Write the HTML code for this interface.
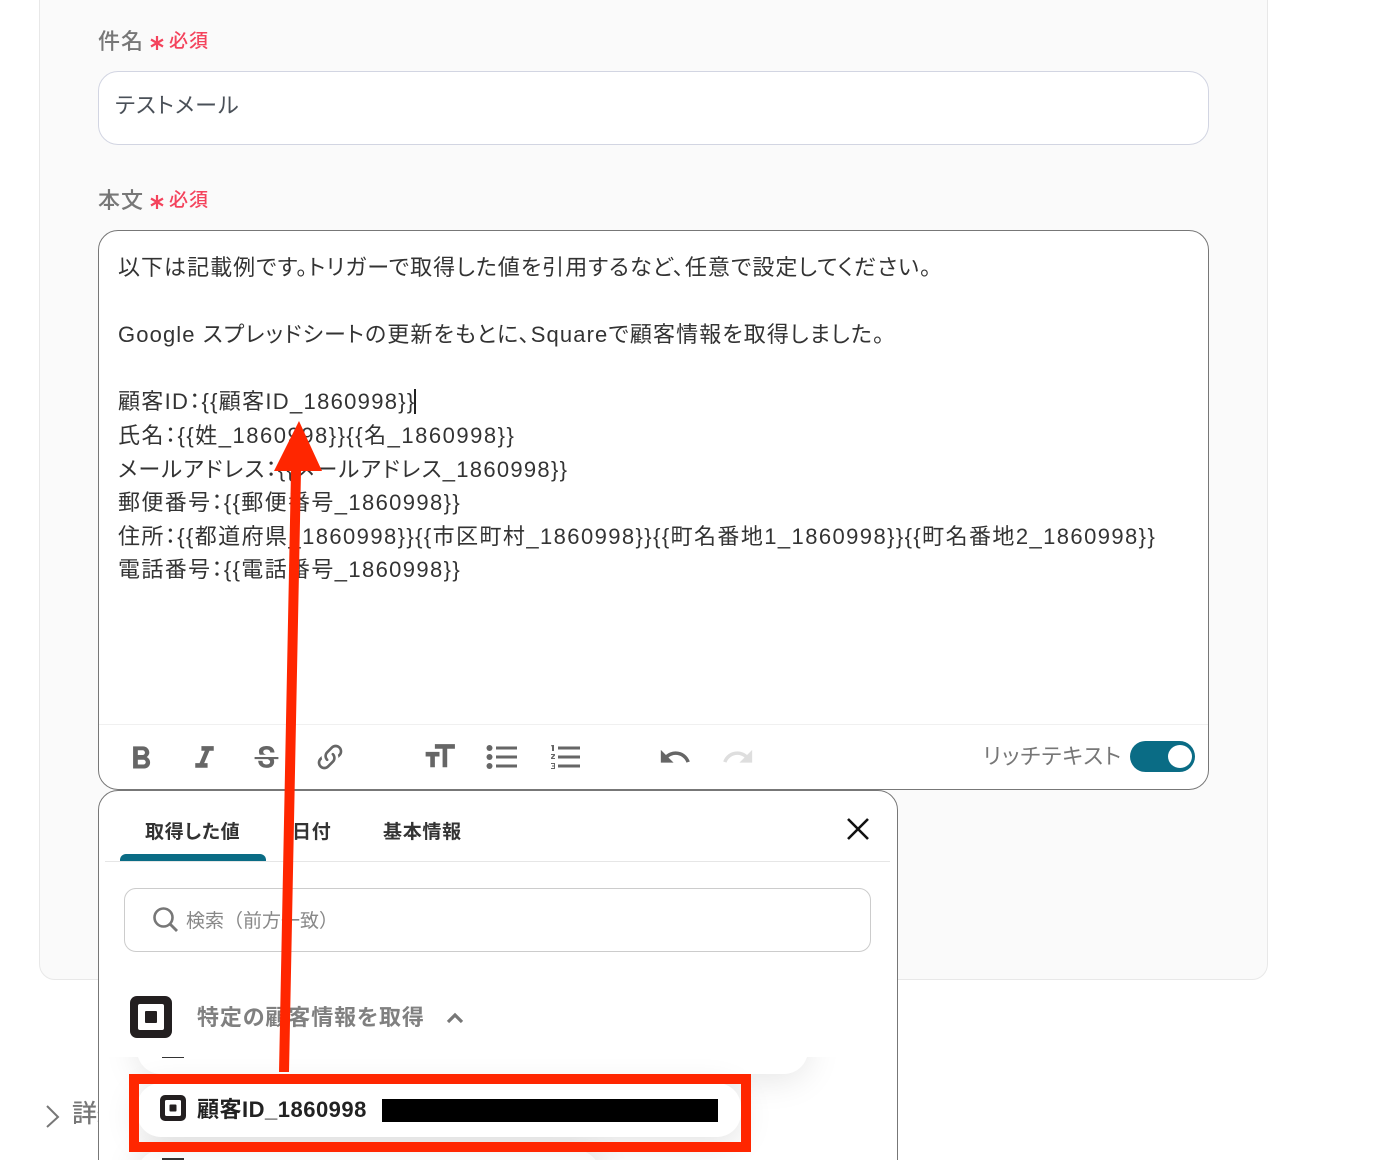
<!DOCTYPE html>
<html lang="ja"><head><meta charset="utf-8"><title>メール設定</title>
<style>
*{box-sizing:border-box;margin:0;padding:0}
html,body{width:1388px;height:1160px;overflow:hidden;background:#fff}
body{position:relative;font-family:"Liberation Sans","Noto Sans CJK JP",sans-serif;font-feature-settings:"palt"}
.a{position:absolute}
.t{position:absolute;white-space:nowrap;line-height:34px}
.b{font-size:22px;color:#333;left:118px}
.lab{font-size:22px;color:#777;font-weight:500;left:98px;letter-spacing:1px}
.req{font-size:19px;color:#f4435c;font-weight:500;left:169px;letter-spacing:1px}
.tab{font-size:19px;color:#333;font-weight:700;letter-spacing:.7px;top:816px}
svg{position:absolute;display:block}
.ic{fill:#666}
</style></head><body>
<div class="a" style="left:39px;top:-20px;width:1229px;height:1000px;background:#fafafa;border:1px solid #e8e8e8;border-radius:16px"></div>

<span class="t lab" style="top:25px">件名</span>
<svg style="left:149px;top:35px" width="16" height="16" viewBox="0 0 16 16"><path d="M8,1V15M2,4.500L14,11.500M14,4.500L2,11.500" stroke="#f4435c" stroke-width="2.200" fill="none"/></svg>
<span class="t req" style="top:25px">必須</span>
<div class="a" style="left:98px;top:71px;width:1111px;height:74px;background:#fff;border:1px solid #d2d5e2;border-radius:20px"></div>
<span class="t" style="left:115px;top:89px;font-size:22px;color:#4a5058;letter-spacing:1.100px">テストメール</span>

<span class="t lab" style="top:184px">本文</span>
<svg style="left:149px;top:194px" width="16" height="16" viewBox="0 0 16 16"><path d="M8,1V15M2,4.500L14,11.500M14,4.500L2,11.500" stroke="#f4435c" stroke-width="2.200" fill="none"/></svg>
<span class="t req" style="top:184px">必須</span>
<div class="a" style="left:98px;top:230px;width:1111px;height:560px;background:#fff;border:1px solid #777;border-radius:20px"></div>
<span class="t b" style="top:251px;letter-spacing:1.030px">以下は記載例です。トリガーで取得した値を引用するなど、任意で設定してください。</span>
<span class="t b" style="top:318px;letter-spacing:1.120px">Google スプレッドシートの更新をもとに、Squareで顧客情報を取得しました。</span>
<span class="t b" style="top:385px;letter-spacing:1.300px">顧客ID：{{顧客ID_1860998}}</span>
<div class="a" style="left:414px;top:389px;width:2px;height:25px;background:#222"></div>
<span class="t b" style="top:419px;letter-spacing:1.510px">氏名：{{姓_1860998}}{{名_1860998}}</span>
<span class="t b" style="top:453px;letter-spacing:1.290px">メールアドレス：{{メールアドレス_1860998}}</span>
<span class="t b" style="top:486px;letter-spacing:1.370px">郵便番号：{{郵便番号_1860998}}</span>
<span class="t b" style="top:520px;letter-spacing:1.415px">住所：{{都道府県_1860998}}{{市区町村_1860998}}{{町名番地1_1860998}}{{町名番地2_1860998}}</span>
<span class="t b" style="top:553px;letter-spacing:1.370px">電話番号：{{電話番号_1860998}}</span>

<div class="a" style="left:99px;top:724px;width:1109px;height:1px;background:#f0f0f0"></div>
<svg class="ic" style="left:122px;top:740px" width="38" height="38" viewBox="0 0 24 24"><path d="M13.5,15.5H10V12.5H13.5A1.5,1.5 0 0,1 15,14A1.5,1.5 0 0,1 13.5,15.5M10,6.5H13A1.5,1.5 0 0,1 14.5,8A1.5,1.5 0 0,1 13,9.5H10M15.6,10.79C16.57,10.11 17.25,9 17.25,8C17.25,5.74 15.5,4 13.25,4H7V18H14.04C16.14,18 17.75,16.3 17.75,14.21C17.75,12.69 16.89,11.39 15.6,10.79Z"/></svg>
<svg class="ic" style="left:186px;top:740px" width="37" height="37" viewBox="0 0 24 24"><path d="M10,4V7H12.21L8.79,15H6V18H14V15H11.79L15.21,7H18V4H10Z"/></svg>
<svg class="ic" style="left:253px;top:744px" width="27" height="26" viewBox="0 0 24 24"><path d="M23,12V14H18.61C19.61,16.14 19.56,22 12.38,22C4.05,22.04 4.37,15.5 4.37,15.5L8.34,15.55C8.37,18.92 11.5,18.92 12.12,18.88C12.76,18.83 15.15,18.84 15.34,16.5C15.42,15.41 14.32,14.58 13.12,14H1V12H23M19.41,7.89L15.43,7.86C15.43,7.86 15.6,5.09 12.15,5.08C8.7,5.06 9,7.28 9,7.56C9.04,7.84 9.34,9.22 12,9.88H5.71C5.71,9.88 2.22,3 10.74,2C19.45,1 19.41,7.89 19.41,7.89Z"/></svg>
<svg class="ic" style="left:314px;top:741px" width="32" height="32" viewBox="0 0 24 24"><path d="M10.59,13.41C11,13.8 11,14.44 10.59,14.83C10.2,15.22 9.56,15.22 9.17,14.83C7.22,12.88 7.22,9.71 9.17,7.76V7.76L12.71,4.22C14.66,2.27 17.83,2.27 19.78,4.22C21.73,6.17 21.73,9.34 19.78,11.29L18.29,12.78C18.3,11.96 18.17,11.14 17.89,10.36L18.36,9.88C19.54,8.71 19.54,6.81 18.36,5.64C17.19,4.46 15.29,4.46 14.12,5.64L10.59,9.17C9.41,10.34 9.41,12.24 10.59,13.41M13.41,9.17C13.8,8.78 14.44,8.78 14.83,9.17C16.78,11.12 16.78,14.29 14.83,16.24V16.24L11.29,19.78C9.34,21.73 6.17,21.73 4.22,19.78C2.27,17.83 2.27,14.66 4.22,12.71L5.71,11.22C5.7,12.04 5.83,12.86 6.11,13.65L5.64,14.12C4.46,15.29 4.46,17.19 5.64,18.36C6.81,19.54 8.71,19.54 9.88,18.36L13.41,14.83C14.59,13.66 14.59,11.76 13.41,10.59C13,10.2 13,9.56 13.41,9.17Z"/></svg>
<svg class="ic" style="left:421px;top:738px" width="37" height="37" viewBox="0 0 24 24"><path d="M3,12H6V19H9V12H12V9H3M9,4V7H14V19H17V7H22V4H9Z"/></svg>
<svg class="ic" style="left:486px;top:745px" width="32" height="26" viewBox="0 0 32 26"><circle cx="3.500" cy="3" r="3"/><circle cx="3.500" cy="12" r="3"/><circle cx="3.500" cy="21" r="3"/><rect x="10" y="1.500" width="21" height="3"/><rect x="10" y="10.500" width="21" height="3"/><rect x="10" y="19.500" width="21" height="3"/></svg>
<svg class="ic" style="left:549px;top:745px" width="32" height="26" viewBox="0 0 32 26"><path d="M3,0H5V6H3V1.300H2V0.500Z"/><path d="M2,9H6V10.500L3.500,13H6V14H2V12.800L4.500,10H2Z"/><path d="M2,18H6V24H2V23H5V21.500H3V20.500H5V19H2Z"/><rect x="9" y="1.500" width="22" height="3"/><rect x="9" y="10.500" width="22" height="3"/><rect x="9" y="19.500" width="22" height="3"/></svg>
<svg class="ic" style="left:658px;top:740px" width="34" height="34" viewBox="0 0 24 24"><path d="M12.5,8C9.85,8 7.45,9 5.6,10.6L2,7V16H11L7.38,12.38C8.77,11.22 10.54,10.5 12.5,10.5C16.04,10.5 19.05,12.81 20.1,16L22.47,15.22C21.08,11.03 17.15,8 12.5,8Z"/></svg>
<svg style="left:721px;top:740px;fill:#dedede" width="34" height="34" viewBox="0 0 24 24"><path d="M18.4,10.6C16.55,9 14.15,8 11.5,8C6.85,8 2.92,11.03 1.54,15.22L3.9,16C4.95,12.81 7.95,10.5 11.5,10.5C13.45,10.5 15.23,11.22 16.62,12.38L13,16H22V7L18.4,10.6Z"/></svg>
<span class="t" style="left:983px;top:740px;font-size:22px;color:#777;letter-spacing:1px">リッチテキスト</span>
<div class="a" style="left:1130px;top:741px;width:65px;height:31px;border-radius:16px;background:#0a6c85"></div>
<div class="a" style="left:1168px;top:745px;width:24px;height:23px;border-radius:50%;background:#fff"></div>

<!-- panel -->
<div class="a" style="left:98px;top:790px;width:800px;height:400px;background:#fff;border:1px solid #777;border-radius:20px 20px 0 0;overflow:hidden"></div>
<div class="a" style="left:105px;top:861px;width:785px;height:1px;background:#e6e6e6"></div>
<div class="a" style="left:120px;top:854px;width:146px;height:7px;background:#0a6c85;border-radius:6px 6px 0 0"></div>
<span class="t tab" style="left:145px">取得した値</span>
<span class="t tab" style="left:292px">日付</span>
<span class="t tab" style="left:383px">基本情報</span>
<svg style="left:845px;top:816px" width="26" height="26" viewBox="0 0 26 26"><path d="M3,3L23,23M23,3L3,23" stroke="#111" stroke-width="2.600" fill="none"/></svg>
<div class="a" style="left:124px;top:888px;width:747px;height:64px;background:#fff;border:1px solid #ccc;border-radius:12px"></div>
<svg style="left:152px;top:906px" width="27" height="27" viewBox="0 0 27 27"><circle cx="11.500" cy="11.500" r="9" stroke="#777" stroke-width="2.600" fill="none"/><path d="M18,18L25,25" stroke="#777" stroke-width="2.800"/></svg>
<span class="t" style="left:186px;top:905px;font-size:19px;color:#888;font-feature-settings:normal">検索（前方一致）</span>
<svg style="left:130px;top:996px" width="42" height="42" viewBox="0 0 42 42"><rect width="42" height="42" rx="7" fill="#231f20"/><rect x="8" y="8" width="26" height="26" rx="2" fill="#fff"/><rect x="15" y="15" width="12" height="12" rx="1" fill="#231f20"/></svg>
<span class="t" style="left:197px;top:1001px;font-size:22px;color:#808080;font-weight:700;letter-spacing:.9px">特定の顧客情報を取得</span>
<svg style="left:445px;top:1011px" width="20" height="14" viewBox="0 0 20 14"><path d="M3,11L10,4L17,11" stroke="#777" stroke-width="3.200" fill="none"/></svg>

<!-- list -->
<div class="a" style="left:99px;top:1057px;width:798px;height:103px;overflow:hidden">
  <div class="a" style="left:38px;top:93px;width:463px;height:60px;background:#fff;border-radius:24px;box-shadow:0 0 34px rgba(0,0,0,.12)"></div>
  <div class="a" style="left:38px;top:-60px;width:671px;height:77px;background:#fff;border-radius:0 0 24px 24px;box-shadow:0 6px 34px rgba(0,0,0,.1)"></div>
  <div class="a" style="left:38px;top:26px;width:604px;height:54px;background:#fff;border-radius:24px;box-shadow:0 6px 34px rgba(0,0,0,.12)"></div>
  <div class="a" style="left:63px;top:0;width:22px;height:1px;background:#333"></div>
  <div class="a" style="left:63px;top:101px;width:22px;height:2px;background:#333"></div>
</div>
<svg style="left:160px;top:1095px" width="26" height="26" viewBox="0 0 26 26"><rect width="26" height="26" rx="5" fill="#231f20"/><rect x="5" y="5" width="16" height="16" rx="1.500" fill="#fff"/><rect x="9.500" y="9.500" width="7" height="7" rx="1" fill="#231f20"/></svg>
<span class="t" style="left:197px;top:1093px;font-size:22px;color:#222;font-weight:700;letter-spacing:.5px">顧客ID_1860998</span>
<div class="a" style="left:382px;top:1099px;width:336px;height:23px;background:#000"></div>

<div class="a" style="left:0;top:1100px;width:98px;height:60px;overflow:hidden">
<svg style="left:44px;top:3px" width="18" height="26" viewBox="0 0 18 26"><path d="M3,3L14,14L3,24" stroke="#777" stroke-width="2" fill="none"/></svg>
<span class="t" style="left:72px;top:-3px;font-size:25px;color:#777;font-weight:500">詳細</span>
</div>

<!-- red annotations -->
<div class="a" style="left:129px;top:1074px;width:622px;height:78px;border:10px solid #ff2600"></div>
<svg style="left:0;top:0" width="1388" height="1160" viewBox="0 0 1388 1160"><polygon fill="#ff2600" points="299,421 322,471 301,471 289,1072 279,1072 291,471 274,471"/></svg>
</body></html>
